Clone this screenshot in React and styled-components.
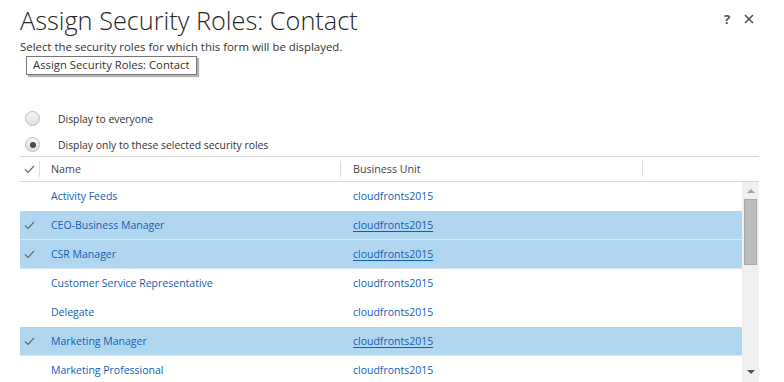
import React from 'react';
import styled, { createGlobalStyle } from 'styled-components';

const GlobalStyle = createGlobalStyle`
    html, body {
        margin: 0;
        padding: 0;
        background: #ffffff;
    }
    body {
        font-family: "Open Sans", "Liberation Sans", sans-serif;
        color: #444444;
    }
`

const Page = styled.div`
    position: relative;
    width: 784px;
    height: 382px;
    overflow: hidden;
    padding: 0 25px 0 20px;
    box-sizing: border-box;
`

const TitleBar = styled.div`
    display: flex;
    align-items: flex-start;
    justify-content: space-between;
    height: 40px;
`

const Title = styled.h1`
    margin: 0;
    padding-top: 2px;
    font-size: 25.3px;
    font-weight: 300;
    color: #262626;
    line-height: 36px;
    white-space: nowrap;
`

const Icons = styled.div`
    display: flex;
    gap: 10px;
    margin-top: 9px;
    margin-right: 4px;
`

const IconButton = styled.span`
    width: 12px;
    height: 20px;
    display: flex;
    align-items: center;
    justify-content: center;
    font-size: 13px;
    font-weight: 700;
    color: #505050;
`

const Subtitle = styled.p`
    margin: 0;
    font-size: 11.4px;
    line-height: 14px;
    color: #333333;
`

const Tooltip = styled.div`
    position: absolute;
    left: 26px;
    top: 56px;
    padding: 0 6px;
    height: 17px;
    line-height: 16px;
    font-size: 11.3px;
    color: #333333;
    background: #ffffff;
    border: 1px solid #767676;
    box-shadow: 2px 2px 1px rgba(0, 0, 0, 0.3);
    white-space: nowrap;
`

const RadioGroup = styled.div`
    display: flex;
    flex-direction: column;
    gap: 11px;
    margin-top: 57px;
    padding-left: 5px;
`

const RadioRow = styled.label`
    display: flex;
    align-items: center;
    height: 15px;
    font-size: 10.4px;
    color: #333333;
`

const RadioCircle = styled.span`
    width: 13px;
    height: 13px;
    border-radius: 50%;
    border: 1px solid #bcbcbc;
    background: linear-gradient(#f6f6f6, #dfdfdf);
    margin-right: 18px;
    display: flex;
    align-items: center;
    justify-content: center;
    &::after {
        content: "";
        width: 6px;
        height: 6px;
        border-radius: 50%;
        background: ${p => (p.checked ? '#4a4a4a' : 'transparent')};
    }
`

const Grid = styled.div`
    margin-top: 4px;
`

const HeaderRow = styled.div`
    display: flex;
    height: 24px;
    border-top: 1px solid #d8d8d8;
    border-bottom: 1px solid #d8d8d8;
`

const HeaderCell = styled.div`
    width: ${p => p.w}px;
    flex: ${p => (p.w ? 'none' : '1')};
    display: flex;
    align-items: center;
    padding-left: ${p => p.pad || 0}px;
    box-sizing: border-box;
    font-size: 10.7px;
    color: #444444;
    border-right: ${p => (p.divider ? '1px solid #dcdcdc' : 'none')};
    margin: 4px 0;
`

const Body = styled.div`
    display: flex;
`

const Rows = styled.div`
    flex: 1;
`

const Row = styled.div`
    display: flex;
    height: 28px;
    border-bottom: 1px solid ${p => (p.selected ? '#d4e8f7' : '#ffffff')};
    background: ${p => (p.selected ? '#b1d6f0' : '#ffffff')};
`

const Cell = styled.div`
    width: ${p => p.w}px;
    flex: ${p => (p.w ? 'none' : '1')};
    display: flex;
    align-items: center;
    padding-left: ${p => p.pad || 0}px;
    box-sizing: border-box;
    font-size: 10.5px;
    color: #1160b7;
    white-space: nowrap;
`

const Link = styled.span`
    text-decoration: ${p => (p.underline ? 'underline' : 'none')};
    text-underline-offset: 2px;
`

const CheckBox = styled.div`
    width: 20px;
    display: flex;
    align-items: center;
    padding-left: 4px;
    box-sizing: border-box;
`

const Scrollbar = styled.div`
    width: 17px;
    background: #f0f0f0;
    display: flex;
    flex-direction: column;
    align-items: center;
    height: 200px;
`

const Arrow = styled.div`
    width: 0;
    height: 0;
    border-left: 4px solid transparent;
    border-right: 4px solid transparent;
    ${p => (p.down
        ? 'border-top: 4px solid #505050; margin-top: auto; margin-bottom: 8px;'
        : 'border-bottom: 4px solid #a3a3a3; margin-top: 7px;')}
`

const Thumb = styled.div`
    width: 11px;
    height: 64px;
    margin-top: 6px;
    background: #bcbcbc;
    border: 1px solid #a8a8a8;
`

const Check = ({ color = '#6a6a6a' }) => (
    <svg width="11" height="9" viewBox="0 0 11 9">
        <path d="M1 4.5 L4 7.5 L10 1" fill="none" stroke={color} strokeWidth="1.2" />
    </svg>
)

const roles = [
    { name: 'Activity Feeds', selected: false },
    { name: 'CEO-Business Manager', selected: true },
    { name: 'CSR Manager', selected: true },
    { name: 'Customer Service Representative', selected: false },
    { name: 'Delegate', selected: false },
    { name: 'Marketing Manager', selected: true },
    { name: 'Marketing Professional', selected: false },
]

const App = () => (
    <Page>
        <GlobalStyle />
        <TitleBar>
            <Title>Assign Security Roles: Contact</Title>
            <Icons>
                <IconButton>?</IconButton>
                <IconButton>
                    <svg width="10" height="10" viewBox="0 0 10 10">
                        <path d="M1 1 L9 9 M9 1 L1 9" stroke="#505050" strokeWidth="1.6" />
                    </svg>
                </IconButton>
            </Icons>
        </TitleBar>
        <Subtitle>Select the security roles for which this form will be displayed.</Subtitle>
        <Tooltip>Assign Security Roles: Contact</Tooltip>

        <RadioGroup>
            <RadioRow><RadioCircle />Display to everyone</RadioRow>
            <RadioRow><RadioCircle checked />Display only to these selected security roles</RadioRow>
        </RadioGroup>

        <Grid>
            <HeaderRow>
                <HeaderCell w={20} pad={4} divider><Check /></HeaderCell>
                <HeaderCell w={301} pad={11} divider>Name</HeaderCell>
                <HeaderCell w={302} pad={12} divider>Business Unit</HeaderCell>
                <HeaderCell />
            </HeaderRow>
            <Body>
                <Rows>
                    {roles.map((role, i) => (
                        <Row key={i} selected={role.selected}>
                            <CheckBox>{role.selected && <Check />}</CheckBox>
                            <Cell w={301} pad={11}>{role.name}</Cell>
                            <Cell pad={12}><Link underline={role.selected}>cloudfronts2015</Link></Cell>
                        </Row>
                    ))}
                </Rows>
                <Scrollbar>
                    <Arrow />
                    <Thumb />
                    <Arrow down />
                </Scrollbar>
            </Body>
        </Grid>
    </Page>
)

export default App;
